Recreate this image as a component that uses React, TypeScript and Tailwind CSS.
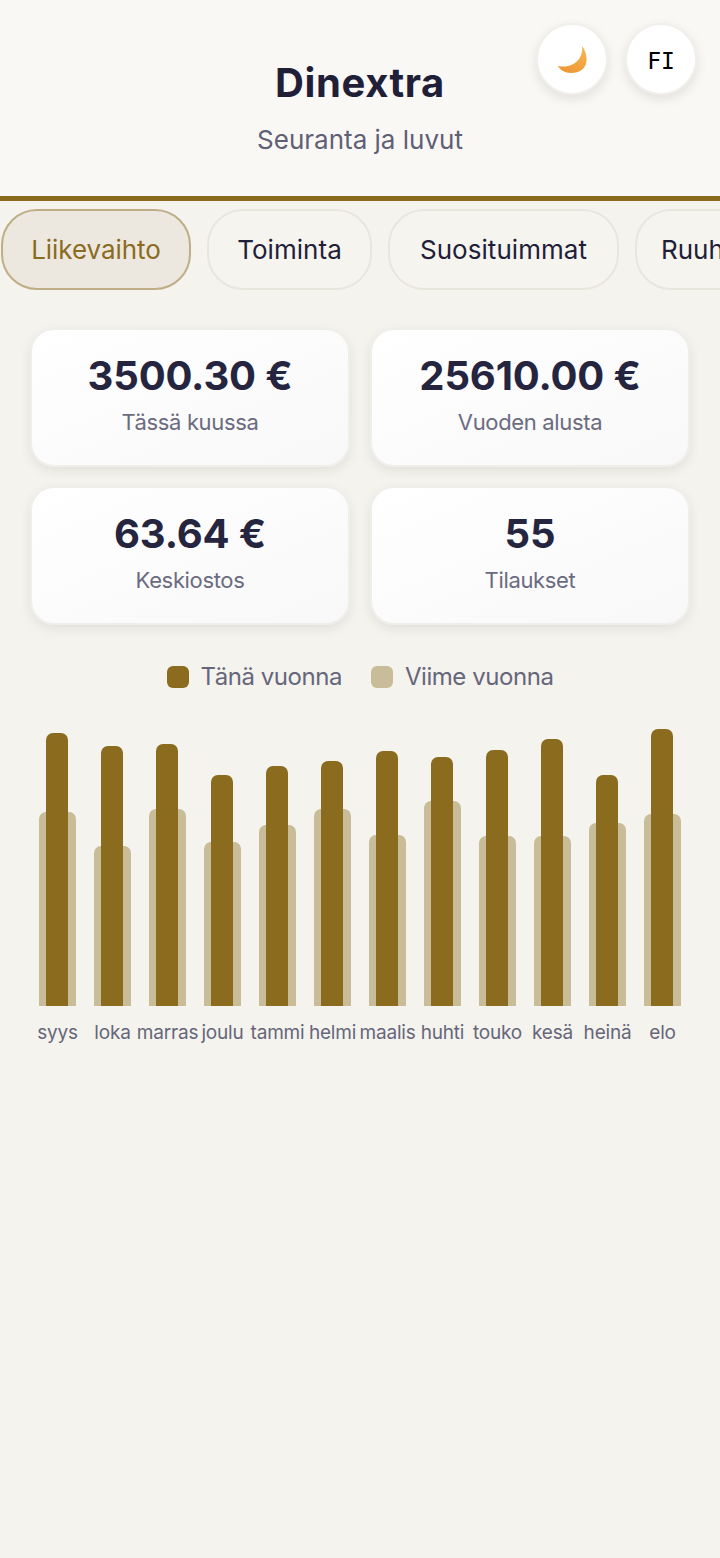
import React from "react";

const font = { fontFamily: "Inter, 'Noto Sans', sans-serif" };

const months = [
  { m: "syys", dark: 733, light: 812 },
  { m: "loka", dark: 746, light: 846 },
  { m: "marras", dark: 744, light: 809 },
  { m: "joulu", dark: 775, light: 842 },
  { m: "tammi", dark: 766, light: 825 },
  { m: "helmi", dark: 761, light: 809 },
  { m: "maalis", dark: 751, light: 835 },
  { m: "huhti", dark: 757, light: 801 },
  { m: "touko", dark: 750, light: 836 },
  { m: "kesä", dark: 739, light: 836 },
  { m: "heinä", dark: 775, light: 823 },
  { m: "elo", dark: 729, light: 814 },
];

function Card({ value, label }: { value: string; label: string }) {
  return (
    <div className="h-[139px] rounded-[24px] border-2 border-[#efeeea] bg-gradient-to-br from-white to-[#f8f8f8] shadow-[0_4px_12px_rgba(0,0,0,0.08)] flex flex-col items-center pt-[21px]">
      <div className="text-[40px] leading-[50px] font-bold text-[#25253f] tracking-[-0.15px]">{value}</div>
      <div className="text-[22px] leading-[30px] mt-[6px] text-[#6b6b80] tracking-[-0.35px]">{label}</div>
    </div>
  );
}

function Tab({ label, w, active }: { label: string; w: string; active?: boolean }) {
  return (
    <div
      className={
        active
          ? "h-[81px] shrink-0 w-[190px] rounded-[36px] border-2 border-[#bfae85] bg-[#ece8e0] flex items-center justify-center text-[26px] text-[#8b6b1e] tracking-[-0.05px]"
          : `h-[81px] shrink-0 ${w} rounded-[36px] border-2 border-[#e9e6de] bg-[#f6f4ef] flex items-center justify-center text-[26px] text-[#1f2038] tracking-[0.05px] whitespace-nowrap`
      }
    >
      {label}
    </div>
  );
}

export default function App() {
  return (
    <div className="min-h-[1558px] bg-[#f5f3ee] overflow-hidden" style={font}>
      <header className="relative h-[201px] bg-[#faf8f5] border-b-[5px] border-[#8b6b1e] flex flex-col items-center">
        <h1 className="mt-[58px] text-[40px] leading-[50px] font-bold text-[#1f2038] tracking-[0.6px]">Dinextra</h1>
        <p className="mt-[15px] text-[26px] leading-[34px] text-[#5f5f75] tracking-[0px]">Seuranta ja luvut</p>
        <div className="absolute top-[23px] right-[23px] flex gap-[17px]">
          <div className="w-[72px] h-[72px] rounded-full bg-white border-2 border-[#f1efeb] shadow-[0_4px_12px_rgba(0,0,0,0.1)] flex items-center justify-center">
            <svg width="34" height="30" viewBox="0 0 34 30" className="ml-[2px] mt-[1px]">
              <defs>
                <linearGradient id="moon" x1="0.2" y1="1" x2="0.8" y2="0">
                  <stop offset="0" stopColor="#ee9636" />
                  <stop offset="1" stopColor="#f6b44f" />
                </linearGradient>
              </defs>
              <path d="M26 1 C33 10 34 28 15 28 C9 28 4 25 2 21 C14 24 28 16 26 1 Z" fill="url(#moon)" />
            </svg>
          </div>
          <div
            className="w-[72px] h-[72px] rounded-full bg-white border-2 border-[#f1efeb] shadow-[0_4px_12px_rgba(0,0,0,0.1)] flex items-center justify-center pt-[5px] text-[23px] text-[#000]"
            style={{ fontFamily: "'DejaVu Sans Mono', monospace" }}
          >
            FI
          </div>
        </div>
      </header>

      <div className="flex gap-[16px] mt-[8px] pl-[1px] overflow-hidden">
        <Tab label="Liikevaihto" w="w-[190px]" active />
        <Tab label="Toiminta" w="w-[165px]" />
        <Tab label="Suosituimmat" w="w-[231px]" />
        <Tab label="Ruuhka-ajat" w="w-[200px]" />
      </div>

      <div className="grid grid-cols-2 gap-x-[20px] gap-y-[19px] mx-[30px] mt-[38px]">
        <Card value="3500.30 €" label="Tässä kuussa" />
        <Card value="25610.00 €" label="Vuoden alusta" />
        <Card value="63.64 €" label="Keskiostos" />
        <Card value="55" label="Tilaukset" />
      </div>

      <div className="flex justify-center gap-[29px] mt-[36px] text-[24px] leading-[32px] text-[#66667a] tracking-[-0.45px]">
        <div className="flex items-center gap-[12px]">
          <span className="w-[22px] h-[22px] rounded-[6px] bg-[#8b6b1e]" />
          Tänä vuonna
        </div>
        <div className="flex items-center gap-[12px]">
          <span className="w-[22px] h-[22px] rounded-[6px] bg-[#c9bc98]" />
          Viime vuonna
        </div>
      </div>

      <div className="flex mx-[30px] mt-[27px]">
        {months.map((d) => (
          <div key={d.m} className="flex-1 min-w-0 flex flex-col items-center">
            <div className="relative h-[286px] w-[37px] shrink-0">
              <div
                className="absolute bottom-0 left-0 w-[37px] rounded-t-[7px] bg-[#c9bc98]"
                style={{ height: 1006 - d.light }}
              />
              <div
                className="absolute bottom-0 left-[7px] w-[22px] rounded-t-[7px] bg-[#8b6b1e]"
                style={{ height: 1006 - d.dark }}
              />
            </div>
            <div className="mt-[14px] text-[19px] leading-[26px] text-[#66667a] tracking-[-0.2px] whitespace-nowrap">{d.m}</div>
          </div>
        ))}
      </div>
    </div>
  );
}
